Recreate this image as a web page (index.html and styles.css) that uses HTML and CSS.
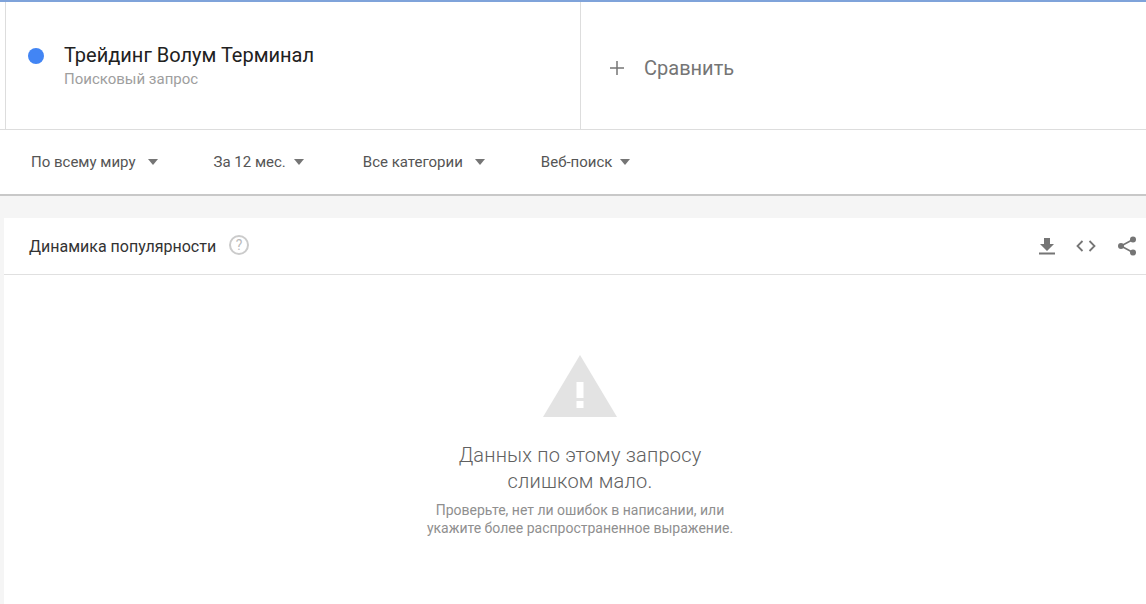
FILE: index.html
```html
<!DOCTYPE html>
<html lang="ru">

<head>
    <meta charset="UTF-8">
    <title>Google Trends</title>
    <link rel="stylesheet" href="styles.css">
</head>

<body>
    <div class="terms">
        <div class="term-box">
            <span class="term-dot"></span>
            <div>
                <div class="term-name">Трейдинг Волум Терминал</div>
                <div class="term-type">Поисковый запрос</div>
            </div>
        </div>
        <div class="compare-box">
            <svg class="plus-icon" width="16" height="16" viewBox="0 0 16 16">
                <path d="M8 1v14M1 8h14" stroke="#757575" stroke-width="1.5" fill="none" />
            </svg>
            <span class="compare-text">Сравнить</span>
        </div>
    </div>

    <div class="filters">
        <div class="filter filter-geo">По всему миру <span class="arrow"></span></div>
        <div class="filter filter-time">За 12 мес. <span class="arrow arrow-near"></span></div>
        <div class="filter filter-cat">Все категории <span class="arrow"></span></div>
        <div class="filter">Веб-поиск <span class="arrow arrow-near"></span></div>
    </div>

    <div class="card">
        <div class="card-header">
            <span class="card-title">Динамика популярности</span>
            <span class="help-icon">?</span>
            <div class="card-actions">
                <svg width="16" height="18" viewBox="0 0 16 18">
                    <path d="M5 1h6v6h4l-7 7-7-7h4z" fill="#757575" />
                    <rect x="0" y="15.5" width="16" height="2" fill="#757575" />
                </svg>
                <svg width="20" height="12" viewBox="0 0 20 12">
                    <path d="M6.5 1L1.5 6l5 5M13.500 1l5 5-5 5" stroke="#757575" stroke-width="1.8" fill="none" />
                </svg>
                <svg width="20" height="20" viewBox="0 0 20 20">
                    <path d="M16 3.500L4 10l12 6.500" stroke="#757575" stroke-width="1.6" fill="none" />
                    <circle cx="16" cy="3.500" r="3" fill="#757575" />
                    <circle cx="4" cy="10" r="3" fill="#757575" />
                    <circle cx="16" cy="16.500" r="3" fill="#757575" />
                </svg>
            </div>
        </div>
        <div class="empty">
            <svg class="warn-icon" width="74" height="62" viewBox="0 0 74 62">
                <path d="M37 0L74 62H0z" fill="#e3e3e3" />
                <rect x="33.500" y="27" width="7" height="16" fill="#fff" />
                <rect x="33.500" y="46" width="7" height="7" fill="#fff" />
            </svg>
            <div class="empty-title">Данных по этому запросу<br>слишком мало.</div>
            <div class="empty-text">Проверьте, нет ли ошибок в написании, или<br>укажите более распространенное выражение.</div>
        </div>
    </div>
</body>

</html>
```

FILE: styles.css
```css
html,
body {
    height: 100%;
}

body {
    margin: 0;
    overflow: hidden;
    font-family: Roboto, Arial, sans-serif;
    background-color: #f5f5f5;
}

.terms {
    display: flex;
    height: 127px;
    background-color: white;
    border-top: 2px solid #7fa3da;
    border-bottom: 1px solid #ddd;
}

.term-box {
    width: 576px;
    margin-left: 5px;
    border-left: 1px solid #ddd;
    border-right: 1px solid #ddd;
    display: flex;
    align-items: center;
    padding-left: 22px;
    box-sizing: border-box;
}

.term-dot {
    width: 16px;
    height: 16px;
    border-radius: 50%;
    background-color: #4285f4;
    margin-right: 20px;
    margin-top: -20px;
}

.term-name {
    font-size: 20px;
    line-height: 24px;
    color: #212121;
    margin-top: 2px;
}

.term-type {
    font-size: 15px;
    line-height: 24px;
    color: #9e9e9e;
}

.compare-box {
    display: flex;
    align-items: center;
    padding-left: 28px;
    padding-top: 4px;
}

.plus-icon {
    margin-right: 19px;
}

.compare-text {
    font-size: 20px;
    color: #757575;
}

.filters {
    display: flex;
    align-items: center;
    height: 64px;
    padding-left: 31px;
    background-color: white;
    border-bottom: 2px solid #c8c8c8;
}

.filter {
    font-size: 15px;
    color: #555;
    display: flex;
    align-items: center;
    margin-right: 56px;
}

.filter-time {
    margin-right: 59px;
}

.arrow {
    width: 0;
    height: 0;
    margin-left: 12px;
    border-left: 5.500px solid transparent;
    border-right: 5.500px solid transparent;
    border-top: 6px solid #757575;
}

.arrow-near {
    margin-left: 8px;
}

.card {
    margin: 22px 0 0 4px;
    height: 400px;
    background-color: white;
}

.card-header {
    display: flex;
    align-items: center;
    height: 56px;
    padding-left: 25px;
    border-bottom: 1px solid #e0e0e0;
}

.card-title {
    font-size: 16px;
    color: #333;
}

.help-icon {
    width: 16px;
    height: 16px;
    margin-left: 13px;
    margin-top: -2px;
    border: 2px solid #cbcbcb;
    border-radius: 50%;
    font-size: 14px;
    line-height: 16px;
    text-align: center;
    color: #bbb;
}

.card-actions {
    display: flex;
    align-items: center;
    gap: 21px;
    margin-left: auto;
    margin-right: 9px;
}

.empty {
    display: flex;
    flex-direction: column;
    align-items: center;
    padding-top: 80px;
    padding-left: 10px;
    text-align: center;
}

.empty-title {
    margin-top: 25px;
    font-size: 20px;
    font-weight: 300;
    letter-spacing: 0.2px;
    line-height: 26px;
    color: #616161;
}

.empty-text {
    margin-top: 7px;
    font-size: 14px;
    line-height: 18px;
    color: #8f8f8f;
}
```
